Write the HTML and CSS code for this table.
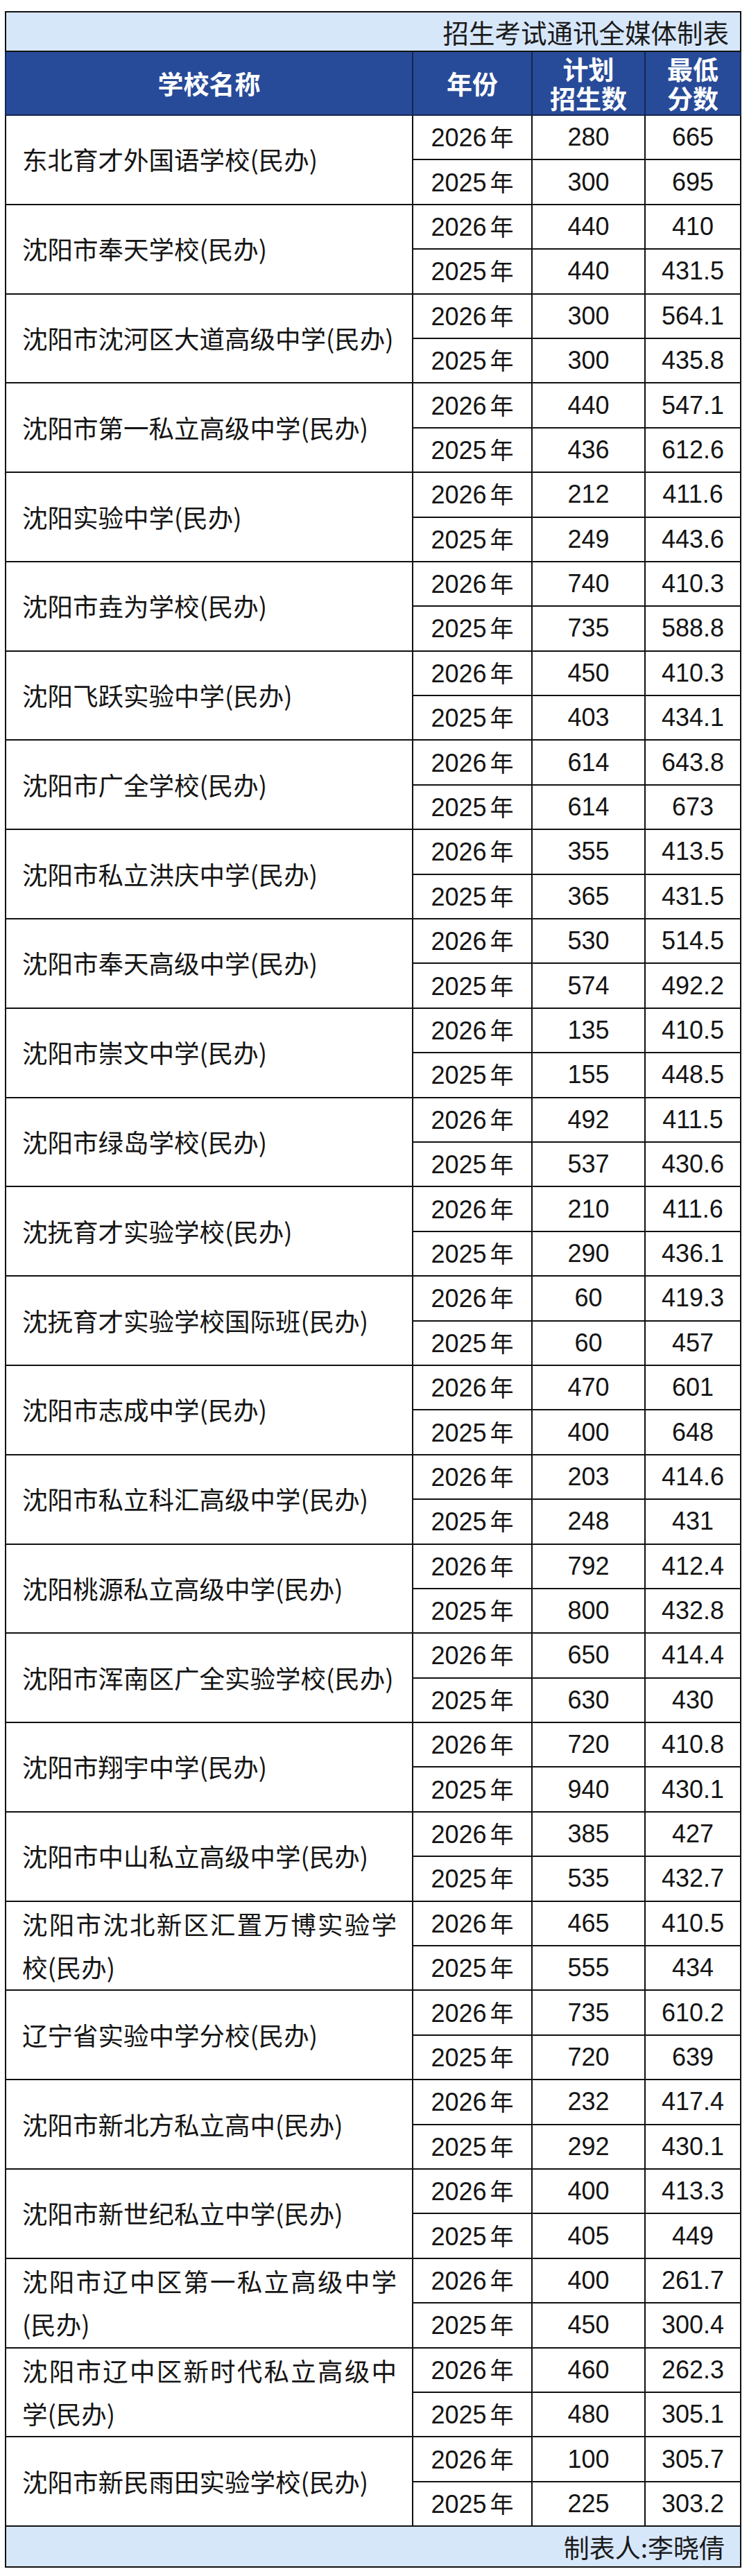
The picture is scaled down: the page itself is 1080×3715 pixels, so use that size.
FILE: index.html
```html
<!DOCTYPE html>
<html lang="zh-CN">
<head>
<meta charset="utf-8">
<title>民办学校招生计划与最低分数</title>
<link rel="stylesheet" href="styles.css">
</head>
<body>
<div class="wrap">
<table class="score-table">
<colgroup>
<col class="c-name"><col class="c-year"><col class="c-plan"><col class="c-score">
</colgroup>
<thead>
<tr class="title-row"><td colspan="4">招生考试通讯全媒体制表</td></tr>
<tr class="head-row">
<th>学校名称</th><th>年份</th><th class="two">计划
招生数</th><th class="two">最低
分数</th>
</tr>
</thead>
<tbody>
<tr class="r1"><td class="name" rowspan="2">东北育才外国语学校(民办)</td><td class="yr">2026<span>年</span></td><td>280</td><td>665</td></tr>
<tr class="r2"><td class="yr">2025<span>年</span></td><td>300</td><td>695</td></tr>
<tr class="r1"><td class="name" rowspan="2">沈阳市奉天学校(民办)</td><td class="yr">2026<span>年</span></td><td>440</td><td>410</td></tr>
<tr class="r2"><td class="yr">2025<span>年</span></td><td>440</td><td>431.5</td></tr>
<tr class="r1"><td class="name" rowspan="2">沈阳市沈河区大道高级中学(民办)</td><td class="yr">2026<span>年</span></td><td>300</td><td>564.1</td></tr>
<tr class="r2"><td class="yr">2025<span>年</span></td><td>300</td><td>435.8</td></tr>
<tr class="r1"><td class="name" rowspan="2">沈阳市第一私立高级中学(民办)</td><td class="yr">2026<span>年</span></td><td>440</td><td>547.1</td></tr>
<tr class="r2"><td class="yr">2025<span>年</span></td><td>436</td><td>612.6</td></tr>
<tr class="r1"><td class="name" rowspan="2">沈阳实验中学(民办)</td><td class="yr">2026<span>年</span></td><td>212</td><td>411.6</td></tr>
<tr class="r2"><td class="yr">2025<span>年</span></td><td>249</td><td>443.6</td></tr>
<tr class="r1"><td class="name" rowspan="2">沈阳市垚为学校(民办)</td><td class="yr">2026<span>年</span></td><td>740</td><td>410.3</td></tr>
<tr class="r2"><td class="yr">2025<span>年</span></td><td>735</td><td>588.8</td></tr>
<tr class="r1"><td class="name" rowspan="2">沈阳飞跃实验中学(民办)</td><td class="yr">2026<span>年</span></td><td>450</td><td>410.3</td></tr>
<tr class="r2"><td class="yr">2025<span>年</span></td><td>403</td><td>434.1</td></tr>
<tr class="r1"><td class="name" rowspan="2">沈阳市广全学校(民办)</td><td class="yr">2026<span>年</span></td><td>614</td><td>643.8</td></tr>
<tr class="r2"><td class="yr">2025<span>年</span></td><td>614</td><td>673</td></tr>
<tr class="r1"><td class="name" rowspan="2">沈阳市私立洪庆中学(民办)</td><td class="yr">2026<span>年</span></td><td>355</td><td>413.5</td></tr>
<tr class="r2"><td class="yr">2025<span>年</span></td><td>365</td><td>431.5</td></tr>
<tr class="r1"><td class="name" rowspan="2">沈阳市奉天高级中学(民办)</td><td class="yr">2026<span>年</span></td><td>530</td><td>514.5</td></tr>
<tr class="r2"><td class="yr">2025<span>年</span></td><td>574</td><td>492.2</td></tr>
<tr class="r1"><td class="name" rowspan="2">沈阳市崇文中学(民办)</td><td class="yr">2026<span>年</span></td><td>135</td><td>410.5</td></tr>
<tr class="r2"><td class="yr">2025<span>年</span></td><td>155</td><td>448.5</td></tr>
<tr class="r1"><td class="name" rowspan="2">沈阳市绿岛学校(民办)</td><td class="yr">2026<span>年</span></td><td>492</td><td>411.5</td></tr>
<tr class="r2"><td class="yr">2025<span>年</span></td><td>537</td><td>430.6</td></tr>
<tr class="r1"><td class="name" rowspan="2">沈抚育才实验学校(民办)</td><td class="yr">2026<span>年</span></td><td>210</td><td>411.6</td></tr>
<tr class="r2"><td class="yr">2025<span>年</span></td><td>290</td><td>436.1</td></tr>
<tr class="r1"><td class="name" rowspan="2">沈抚育才实验学校国际班(民办)</td><td class="yr">2026<span>年</span></td><td>60</td><td>419.3</td></tr>
<tr class="r2"><td class="yr">2025<span>年</span></td><td>60</td><td>457</td></tr>
<tr class="r1"><td class="name" rowspan="2">沈阳市志成中学(民办)</td><td class="yr">2026<span>年</span></td><td>470</td><td>601</td></tr>
<tr class="r2"><td class="yr">2025<span>年</span></td><td>400</td><td>648</td></tr>
<tr class="r1"><td class="name" rowspan="2">沈阳市私立科汇高级中学(民办)</td><td class="yr">2026<span>年</span></td><td>203</td><td>414.6</td></tr>
<tr class="r2"><td class="yr">2025<span>年</span></td><td>248</td><td>431</td></tr>
<tr class="r1"><td class="name" rowspan="2">沈阳桃源私立高级中学(民办)</td><td class="yr">2026<span>年</span></td><td>792</td><td>412.4</td></tr>
<tr class="r2"><td class="yr">2025<span>年</span></td><td>800</td><td>432.8</td></tr>
<tr class="r1"><td class="name" rowspan="2">沈阳市浑南区广全实验学校(民办)</td><td class="yr">2026<span>年</span></td><td>650</td><td>414.4</td></tr>
<tr class="r2"><td class="yr">2025<span>年</span></td><td>630</td><td>430</td></tr>
<tr class="r1"><td class="name" rowspan="2">沈阳市翔宇中学(民办)</td><td class="yr">2026<span>年</span></td><td>720</td><td>410.8</td></tr>
<tr class="r2"><td class="yr">2025<span>年</span></td><td>940</td><td>430.1</td></tr>
<tr class="r1"><td class="name" rowspan="2">沈阳市中山私立高级中学(民办)</td><td class="yr">2026<span>年</span></td><td>385</td><td>427</td></tr>
<tr class="r2"><td class="yr">2025<span>年</span></td><td>535</td><td>432.7</td></tr>
<tr class="r1"><td class="name" rowspan="2">沈阳市沈北新区汇置万博实验学校(民办)</td><td class="yr">2026<span>年</span></td><td>465</td><td>410.5</td></tr>
<tr class="r2"><td class="yr">2025<span>年</span></td><td>555</td><td>434</td></tr>
<tr class="r1"><td class="name" rowspan="2">辽宁省实验中学分校(民办)</td><td class="yr">2026<span>年</span></td><td>735</td><td>610.2</td></tr>
<tr class="r2"><td class="yr">2025<span>年</span></td><td>720</td><td>639</td></tr>
<tr class="r1"><td class="name" rowspan="2">沈阳市新北方私立高中(民办)</td><td class="yr">2026<span>年</span></td><td>232</td><td>417.4</td></tr>
<tr class="r2"><td class="yr">2025<span>年</span></td><td>292</td><td>430.1</td></tr>
<tr class="r1"><td class="name" rowspan="2">沈阳市新世纪私立中学(民办)</td><td class="yr">2026<span>年</span></td><td>400</td><td>413.3</td></tr>
<tr class="r2"><td class="yr">2025<span>年</span></td><td>405</td><td>449</td></tr>
<tr class="r1"><td class="name" rowspan="2">沈阳市辽中区第一私立高级中学(民办)</td><td class="yr">2026<span>年</span></td><td>400</td><td>261.7</td></tr>
<tr class="r2"><td class="yr">2025<span>年</span></td><td>450</td><td>300.4</td></tr>
<tr class="r1"><td class="name" rowspan="2">沈阳市辽中区新时代私立高级中学(民办)</td><td class="yr">2026<span>年</span></td><td>460</td><td>262.3</td></tr>
<tr class="r2"><td class="yr">2025<span>年</span></td><td>480</td><td>305.1</td></tr>
<tr class="r1"><td class="name" rowspan="2">沈阳市新民雨田实验学校(民办)</td><td class="yr">2026<span>年</span></td><td>100</td><td>305.7</td></tr>
<tr class="r2"><td class="yr">2025<span>年</span></td><td>225</td><td>303.2</td></tr>
</tbody>
<tfoot>
<tr class="foot-row"><td colspan="4">制表人:李晓倩</td></tr>
</tfoot>
</table>
</div>
</body>
</html>
```

FILE: styles.css
```css
html, body {
  margin: 0;
  padding: 0;
  background: #ffffff;
}

.wrap {
  padding: 16px 0 0 7px;
}

.score-table {
  width: 1060px;
  table-layout: fixed;
  border-collapse: collapse;
  border: 2px solid #111111;
  font-family: "Liberation Sans", "Noto Sans CJK SC", sans-serif;
  color: #141414;
}

.c-name { width: 587px; }
.c-year { width: 172px; }
.c-plan { width: 163px; }
.c-score { width: 138px; }

.score-table td,
.score-table th {
  border: 2px solid #111111;
  padding: 0;
}

.title-row td {
  height: 55px;
  background: #d7e7fa;
  text-align: right;
  padding-right: 16px;
  font-family: "Noto Sans CJK SC", sans-serif;
  font-size: 37.5px;
  line-height: 44px;
  color: #1b1b1b;
}

.head-row th {
  height: 90px;
  background: #284b99;
  border-color: #16254e;
  color: #ffffff;
  font-family: "Noto Sans CJK SC", sans-serif;
  font-weight: 700;
  font-size: 37px;
  line-height: 42px;
  text-align: center;
  vertical-align: middle;
}

.head-row th.two {
  white-space: pre-line;
}

.score-table tbody td {
  height: 62.4px;
  text-align: center;
  vertical-align: middle;
  font-size: 36px;
  line-height: 40px;
}

.score-table tbody tr.r2 td {
  border-top-color: #2a2a2a;
}

.score-table tbody td.name {
  text-align: justify;
  padding-left: 23px;
  padding-right: 22px;
  font-family: "Noto Sans CJK SC", sans-serif;
  font-size: 36.5px;
  line-height: 62px;
  color: #151515;
}

.yr span {
  margin-left: 5px;
  font-family: "Noto Sans CJK SC", sans-serif;
  font-size: 34px;
}

.foot-row td {
  height: 57px;
  background: #d7e7fa;
  text-align: right;
  padding-right: 22px;
  font-family: "Noto Sans CJK SC", sans-serif;
  font-size: 37px;
  line-height: 44px;
  color: #1b1b1b;
}
```
